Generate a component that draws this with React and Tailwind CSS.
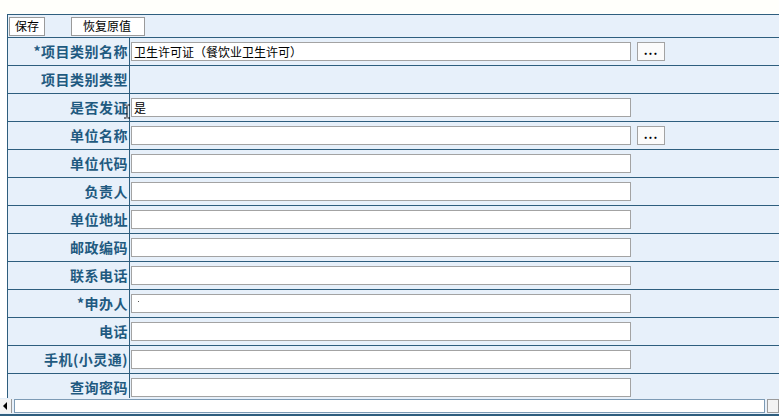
import React from 'react';

const rows = [
    { label: '*项目类别名称', value: '卫生许可证（餐饮业卫生许可）', picker: true },
    { label: '项目类别类型', noInput: true },
    { label: '是否发证', value: '是' },
    { label: '单位名称', value: '', picker: true },
    { label: '单位代码' },
    { label: '负责人' },
    { label: '单位地址' },
    { label: '邮政编码' },
    { label: '联系电话' },
    { label: '*申办人', dot: true },
    { label: '电话' },
    { label: '手机(小灵通)' },
    { label: '查询密码' },
];

const Row = ({ row, index }) => (
    <div className="flex h-[28px] border-b border-[#2e5e7e] relative">
        <div className="w-[122px] shrink-0 border-r border-[#2e5e7e] flex items-center justify-end pr-[1px] text-[14px] font-bold text-[#1f5a80] tracking-[0.5px]">
            {row.label}
        </div>
        <div className="flex items-center pl-[1px] gap-[6px]">
            {!row.noInput && (
                <div className="w-[500px] h-[19px] bg-white border border-[#a3a3a3] flex items-center px-[2px] text-[12px] leading-none text-black">
                    {row.value}
                    {row.dot && <span className="ml-[4px] mb-[4px] w-[1px] h-[1px] bg-[#555]" />}
                </div>
            )}
            {row.picker && (
                <div className="w-[28px] h-[19px] bg-[#fbfbfb] border border-[#a3a3a3] flex items-center justify-center text-[12px] font-bold text-black leading-none pb-[4px] tracking-[1px]">
                    ...
                </div>
            )}
        </div>
        {index === 2 && (
            <svg className="absolute left-[115px] top-[10px]" width="8" height="15" viewBox="0 0 8 15">
                <path d="M1 1h2.5M4.5 1H7M4 1.5v12M1 14h2.5M4.5 14H7" stroke="#000" strokeWidth="1" fill="none" />
            </svg>
        )}
    </div>
);

export default function App() {
    return (
        <div className="w-[779px] h-[416px] overflow-hidden bg-white flex flex-col" style={{ fontFamily: '"Noto Sans CJK SC", "Liberation Sans", sans-serif' }}>
            <div className="h-[14px] shrink-0 bg-[#fffffb]" />

            <div className="flex-1 overflow-hidden pl-[7px]">
                <div className="w-[800px] border-l border-t border-[#2e5e7e] bg-[#e7f0fa]">
                    {/* toolbar */}
                    <div className="h-[23px] border-b border-[#2e5e7e] flex items-center pl-[1px] gap-[26px]">
                        <button className="w-[36px] h-[19px] bg-white border border-[#9a9a9a] text-[12px] text-black leading-none flex items-center justify-center">
                            保存
                        </button>
                        <button className="w-[74px] h-[19px] bg-white border border-[#9a9a9a] text-[12px] text-black leading-none flex items-center pl-[11px]">
                            恢复原值
                        </button>
                    </div>
                    {rows.map((row, i) => (
                        <Row key={row.label} row={row} index={i} />
                    ))}
                </div>
            </div>

            {/* horizontal scrollbar */}
            <div className="h-[18px] shrink-0 bg-[#e7f0fa] border-b-2 border-[#2e5e7e] flex items-start pt-[1px] gap-[2px]">
                <div className="w-[12px] h-[14px] bg-[#f3f3f3] border-r border-[#9a9a9a] flex items-center justify-center">
                    <svg width="5" height="8" viewBox="0 0 5 8"><path d="M4 0L0 4l4 4z" fill="#000" /></svg>
                </div>
                <div className="w-[756px] h-[14px] bg-white border border-[#7d9bb5]" />
                <div className="w-[12px] h-[14px] bg-[#f3f3f3] border border-[#9a9a9a]" />
            </div>
        </div>
    );
}
